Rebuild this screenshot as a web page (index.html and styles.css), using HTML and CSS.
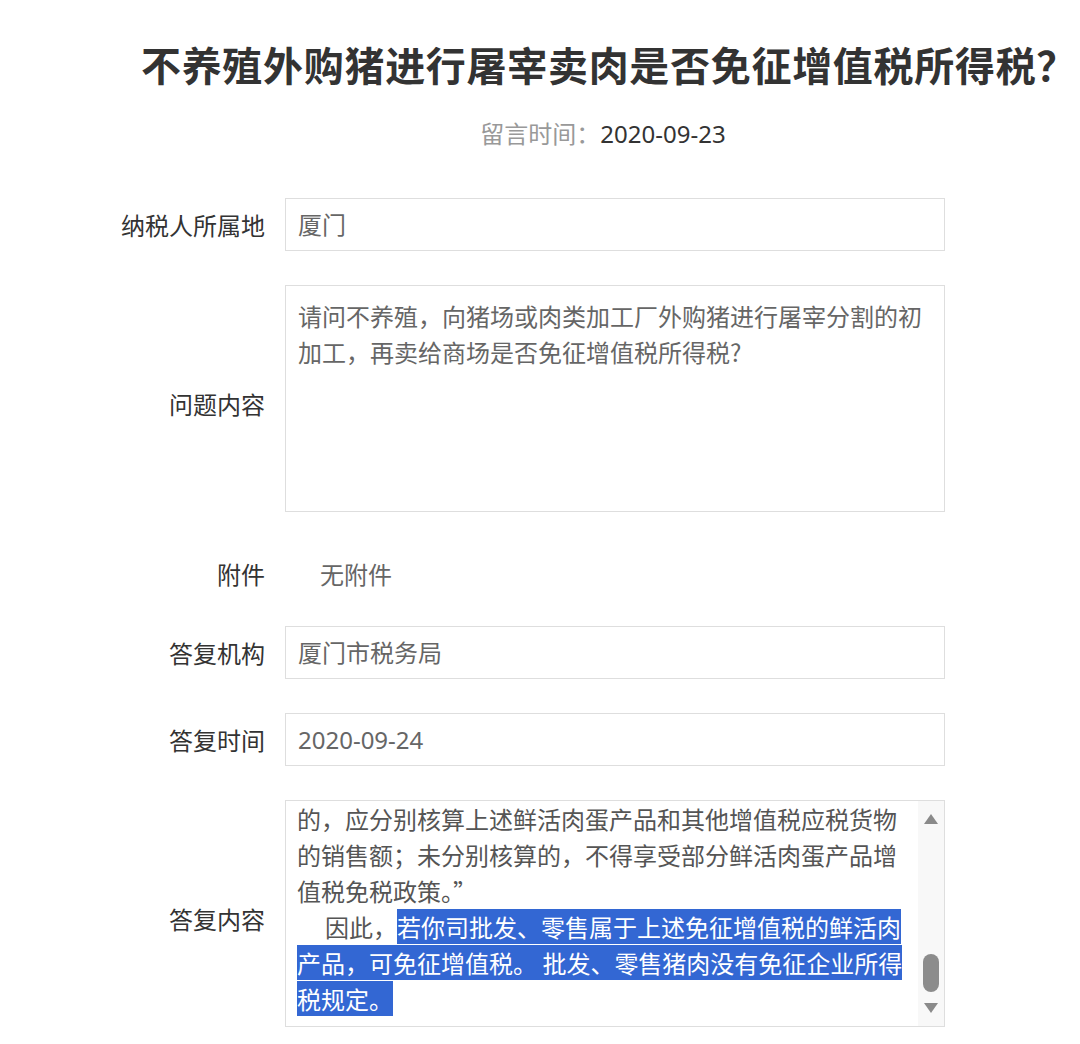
FILE: index.html
```html
<!DOCTYPE html>
<html lang="zh-CN">
  <head>
    <meta charset="UTF-8" />
    <meta name="viewport" content="width=device-width, initial-scale=1.0" />
    <title>留言详情</title>
    <link rel="stylesheet" href="styles.css">
  </head>
  <body>
    <div class="header">
      <h1 class="title">不养殖外购猪进行屠宰卖肉是否免征增值税所得税？</h1>
      <div class="date"><span class="date-label">留言时间：</span>2020-09-23</div>
    </div>

    <div class="form">
      <div class="row">
        <div class="label">纳税人所属地</div>
        <div class="field input">厦门</div>
      </div>

      <div class="row">
        <div class="label label-low">问题内容</div>
        <div class="field textarea">请问不养殖，向猪场或肉类加工厂外购猪进行屠宰分割的初加工，再卖给商场是否免征增值税所得税?</div>
      </div>

      <div class="row row-plain">
        <div class="label">附件</div>
        <div class="plain">无附件</div>
      </div>

      <div class="row">
        <div class="label">答复机构</div>
        <div class="field input">厦门市税务局</div>
      </div>

      <div class="row">
        <div class="label">答复时间</div>
        <div class="field input">2020-09-24</div>
      </div>

      <div class="row">
        <div class="label label-low">答复内容</div>
        <div class="field answer">
          <div class="answer-text">的，应分别核算上述鲜活肉蛋产品和其他增值税应税货物<br>的销售额；未分别核算的，不得享受部分鲜活肉蛋产品增<br>值税免税政策。”<br><span class="indent">因此，</span><span class="sel">若你司批发、零售属于上述免征增值税的鲜活肉</span><br><span class="sel">产品，可免征增值税。 批发、零售猪肉没有免征企业所得</span><br><span class="sel">税规定。</span></div>
          <div class="scrollbar">
            <div class="arrow"><span class="tri-up"></span></div>
            <div class="thumb"></div>
            <div class="arrow"><span class="tri-down"></span></div>
          </div>
        </div>
      </div>
    </div>
  </body>
</html>
```

FILE: styles.css
```css
body {
  margin: 0;
  background-color: #ffffff;
  color: #333333;
  font-family: "Noto Sans CJK SC", "Noto Sans", sans-serif;
}

.header {
  padding-left: 126px;
  padding-top: 36px;
  text-align: center;
}

.title {
  margin: 0;
  padding-left: 12px;
  font-size: 40px;
  line-height: 56px;
  font-weight: 700;
  letter-spacing: 0.7px;
  color: #333333;
  white-space: nowrap;
}

.date {
  margin-top: 24px;
  font-family: "Noto Sans", "Noto Sans CJK SC", sans-serif;
  font-size: 24px;
  line-height: 36px;
  color: #333333;
}

.date-label {
  color: #999999;
}

.form {
  margin-top: 46px;
  margin-left: 95px;
  width: 850px;
  display: flex;
  flex-direction: column;
  gap: 34px;
}

.row {
  display: grid;
  grid-template-columns: 170px 660px;
  column-gap: 20px;
  align-items: center;
}

.label {
  text-align: right;
  font-size: 24px;
  line-height: 36px;
  color: #333333;
}

.label-low {
  padding-top: 10px;
}

.field {
  box-sizing: border-box;
  border: 1px solid #dedede;
  font-size: 24px;
  color: #666666;
}

.input {
  height: 53px;
  line-height: 51px;
  padding: 0 12px;
  font-family: "Noto Sans", "Noto Sans CJK SC", sans-serif;
}

.textarea {
  height: 227px;
  padding: 12px 12px 0 12px;
  line-height: 36px;
}

.row-plain {
  height: 46px;
  align-items: start;
}

.row-plain .label,
.plain {
  padding-top: 11px;
  line-height: 34px;
}

.plain {
  padding-left: 35px;
  font-size: 24px;
  color: #666666;
}

.answer {
  height: 227px;
  display: flex;
  color: #555555;
  overflow: hidden;
}

.answer-text {
  flex: 1;
  padding-left: 11px;
  line-height: 36px;
  white-space: nowrap;
}

.indent {
  padding-left: 28px;
}

.sel {
  background-color: #3367d3;
  color: #ffffff;
}

.scrollbar {
  width: 26px;
  background-color: #f8f8f8;
  display: flex;
  flex-direction: column;
  align-items: center;
}

.arrow {
  height: 36px;
  display: flex;
  align-items: center;
  justify-content: center;
}

.tri-up {
  width: 0;
  height: 0;
  border-left: 7px solid transparent;
  border-right: 7px solid transparent;
  border-bottom: 10px solid #8a8a8a;
}

.tri-down {
  width: 0;
  height: 0;
  border-left: 7px solid transparent;
  border-right: 7px solid transparent;
  border-top: 10px solid #8a8a8a;
}

.thumb {
  margin-top: auto;
  margin-bottom: -2px;
  width: 16px;
  height: 38px;
  border-radius: 8px;
  background-color: #8c8c8c;
}
```
